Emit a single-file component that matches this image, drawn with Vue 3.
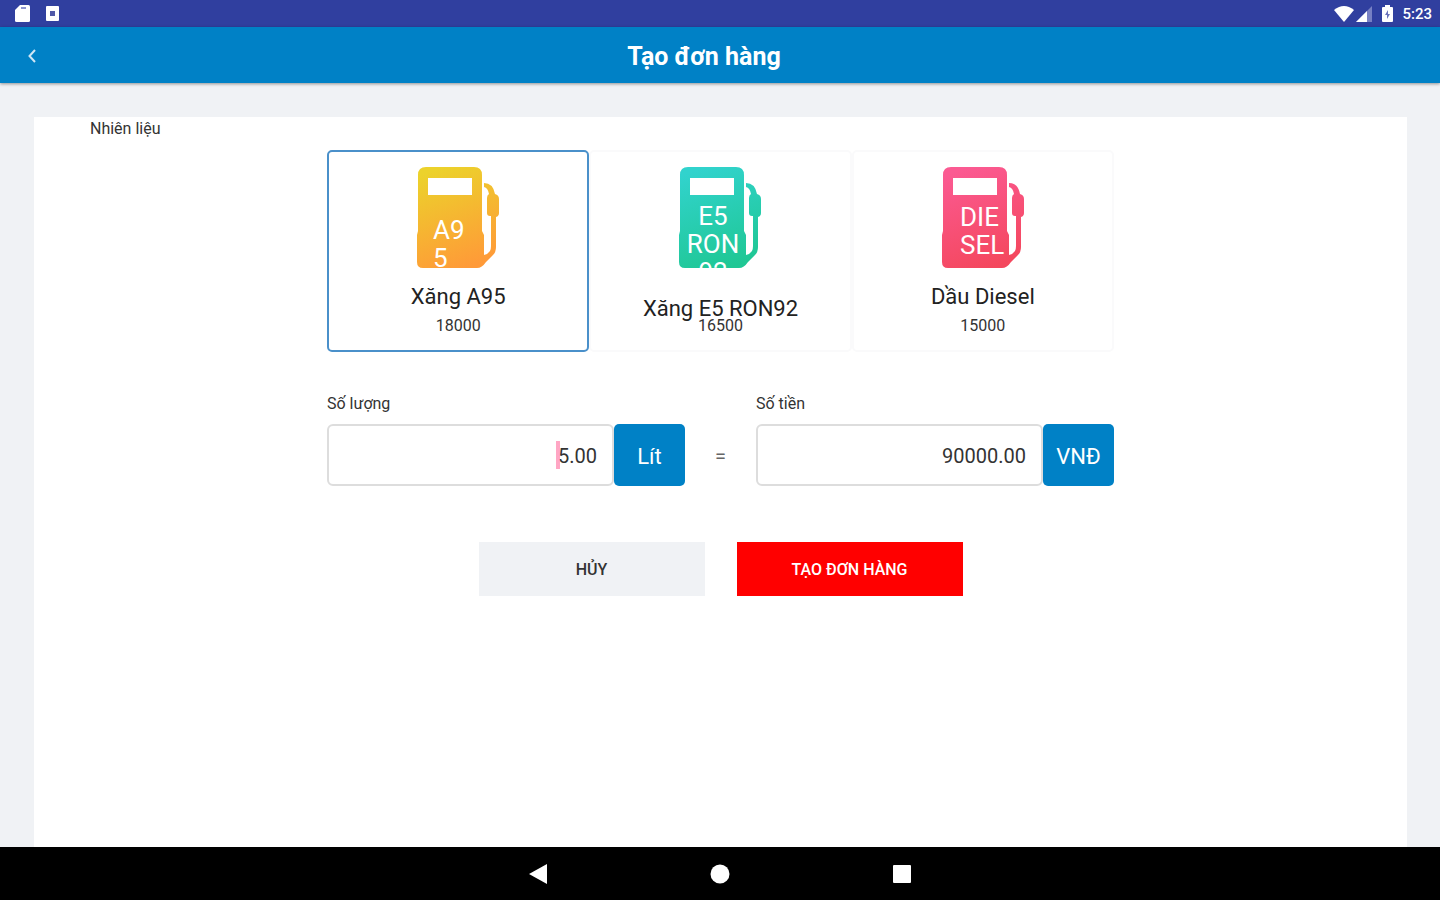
<template>
    <div class="screen">
        <div class="status-bar">
            <div class="status-group">
                <svg class="status-sd" width="15" height="17" viewBox="0 0 15 17" aria-hidden="true">
                    <path d="M5 0h8.5A1.5 1.5 0 0 1 15 1.500v14a1.500 1.500 0 0 1-1.500 1.500h-12A1.500 1.500 0 0 1 0 15.500V5z" fill="#fff" />
                    <path d="M6 3h5" stroke="#8f97d0" stroke-width="2" />
                </svg>
                <svg class="status-app" width="13" height="15" viewBox="0 0 13 15" aria-hidden="true">
                    <rect width="13" height="15" rx="1" fill="#fff" />
                    <rect x="4" y="5" width="5" height="5" fill="#5059a8" />
                </svg>
            </div>
            <div class="status-group right">
                <svg width="20" height="16" viewBox="0 0 20 16" aria-hidden="true">
                    <path d="M0 4Q10-4 20 4L10 16z" fill="#fff" />
                </svg>
                <svg width="16" height="16" viewBox="0 0 16 16" aria-hidden="true">
                    <path d="M16 0v16H0z" fill="#7780c3" />
                    <path d="M11 5v11H0z" fill="#fff" />
                </svg>
                <svg class="status-battery" width="11" height="17" viewBox="0 0 11 17" aria-hidden="true">
                    <path d="M3 0h5v2h2a1 1 0 0 1 1 1v13a1 1 0 0 1-1 1H1a1 1 0 0 1-1-1V3a1 1 0 0 1 1-1h2z" fill="#fff" />
                    <path d="M6 5L3 10h2v4l3-5H6z" fill="#6a73bb" />
                </svg>
                <span class="clock">5:23</span>
            </div>
        </div>

        <header class="header">
            <button class="back" type="button" aria-label="Quay lại">
                <svg width="8" height="14" viewBox="0 0 8 14" aria-hidden="true">
                    <path d="M7 1L1.500 7 7 13" fill="none" stroke="#cfe6f5" stroke-width="2" />
                </svg>
            </button>
            <h1>Tạo đơn hàng</h1>
        </header>

        <main class="content">
            <form class="order" @submit.prevent>
                <h2>Nhiên liệu</h2>
                <div class="form-body">
                    <div class="fuels">
                        <button
                            v-for="fuel in fuels"
                            :key="fuel.id"
                            type="button"
                            class="fuel"
                            :class="{ active: fuel.id == selected, low: fuel.low }"
                            :aria-pressed="fuel.id == selected"
                            @click="selectFuel(fuel)"
                        >
                            <svg class="pump" width="84" height="102" viewBox="0 0 84 102" aria-hidden="true">
                                <defs>
                                    <linearGradient :id="'fill-' + fuel.id" x1="0.3" y1="0" x2="0.6" y2="1">
                                        <stop offset="0" :stop-color="fuel.from" />
                                        <stop offset="1" :stop-color="fuel.to" />
                                    </linearGradient>
                                </defs>
                                <path
                                    :fill="'url(#fill-' + fuel.id + ')'"
                                    fill-rule="evenodd"
                                    d="M10 1h48q8 0 8 8v56l2 4v20q4-1 6-4 1-2 1-5V50h-1q-3 0-3-3V32q0-3 2-4-1-6-5-7v-4q9 0 11 11 4 1 4 5v14q0 3-3 4v30q0 5-3 8l-7 7q-4 6-9 6H7q-6 0-6-6V69l1-4V9q0-8 8-8zM12 12v17h44V12z"
                                />
                                <text v-for="line, i in fuel.lines" :key="i" :x="fuel.x" :y="fuel.y + i * 28" :text-anchor="fuel.anchor">{{ line }}</text>
                            </svg>
                            <span class="fuel-name">{{ fuel.name }}</span>
                            <span class="fuel-price">{{ fuel.price }}</span>
                        </button>
                    </div>

                    <div class="amounts">
                        <div class="field">
                            <label for="quantity">Số lượng</label>
                            <div class="field-row">
                                <div class="input-wrap">
                                    <input id="quantity" v-model="quantity" type="text" inputmode="decimal" @input="updateTotal" />
                                    <i class="caret"></i>
                                </div>
                                <span class="unit">Lít</span>
                            </div>
                        </div>
                        <span class="equals">=</span>
                        <div class="field">
                            <label for="total">Số tiền</label>
                            <div class="field-row">
                                <div class="input-wrap">
                                    <input id="total" v-model="total" type="text" inputmode="decimal" />
                                </div>
                                <span class="unit">VNĐ</span>
                            </div>
                        </div>
                    </div>

                    <div class="actions">
                        <button type="button" class="cancel">HỦY</button>
                        <button type="submit" class="submit">TẠO ĐƠN HÀNG</button>
                    </div>
                </div>
            </form>
        </main>

        <nav class="nav-bar">
            <button type="button" aria-label="Back">
                <svg width="18" height="20" viewBox="0 0 18 20"><path d="M18 0v20L0 10z" fill="#fff" /></svg>
            </button>
            <button type="button" aria-label="Home">
                <svg width="20" height="20" viewBox="0 0 20 20"><circle cx="10" cy="10" r="9.500" fill="#fff" /></svg>
            </button>
            <button type="button" aria-label="Recent">
                <svg width="18" height="20" viewBox="0 0 18 20"><rect y="1" width="18" height="18" rx="1" fill="#fff" /></svg>
            </button>
        </nav>
    </div>
</template>

<script setup>
import { ref } from 'vue';

const fuels = [
    { id: 'a95', name: 'Xăng A95', price: 18000, lines: ['A9', '5'], x: 17, y: 73, anchor: 'start', from: '#ecd22b', to: '#ff9a38' },
    { id: 'e5', name: 'Xăng E5 RON92', price: 16500, lines: ['E5', 'RON', '92'], x: 35, y: 59, anchor: 'middle', from: '#31d3cd', to: '#1fc794', low: true },
    { id: 'diesel', name: 'Dầu Diesel', price: 15000, lines: ['DIE', 'SEL'], x: 19, y: 60, anchor: 'start', from: '#fb5a92', to: '#f4475d' },
]

const selected = ref('a95')
const quantity = ref('5.00')
const total = ref('90000.00')

function updateTotal() {
    const fuel = fuels.find(f => f.id == selected.value)
    total.value = ((parseFloat(quantity.value) || 0) * fuel.price).toFixed(2)
}

function selectFuel(fuel) {
    selected.value = fuel.id
    updateTotal()
}
</script>

<style>
body{
    margin: 0;
}
</style>

<style scoped>
.screen{
    min-height: 100vh;
    display: flex;
    flex-direction: column;
    background: #f0f2f5;
    color: #333;
    font-family: Roboto, "Noto Sans", sans-serif;
}
.screen *{
    box-sizing: border-box;
}
svg{
    display: block;
}
button{
    font-family: inherit;
    color: inherit;
    border: 0;
    padding: 0;
    cursor: pointer;
}

.status-bar{
    height: 27px;
    padding: 0 8px 0 15px;
    display: flex;
    justify-content: space-between;
    background: #303f9f;
}
.status-group{
    display: flex;
    align-items: center;
    gap: 16px;
}
.status-group.right{
    gap: 2px;
}
.status-battery{
    margin: 0 7px 0 8px;
}
.clock{
    color: #fff;
    font-size: 15px;
    font-weight: 500;
}

.header{
    height: 56px;
    display: flex;
    align-items: center;
    padding: 2px 32px 0 0;
    background: #0081c6;
    box-shadow: 0 1px 3px rgba(0, 0, 0, 0.4);
    z-index: 1;
}
.header .back{
    width: 40px;
    height: 54px;
    margin-right: -40px;
    padding-left: 28px;
    background: none;
}
.header h1{
    flex: 1;
    margin: 0;
    text-align: center;
    color: #fff;
    font-size: 25px;
    font-weight: 700;
}

.content{
    flex: 1;
    display: flex;
    padding: 34px 33px 0 34px;
}
.order{
    flex: 1;
    background: #fff;
}
.order h2{
    margin: 0 56px;
    font-size: 16px;
    font-weight: 400;
    line-height: 24px;
}
.form-body{
    max-width: 787px;
    margin: 9px auto 0;
}

.fuels{
    display: grid;
    grid-template-columns: repeat(3, 1fr);
}
.fuel{
    height: 202px;
    padding-top: 14px;
    display: flex;
    flex-direction: column;
    align-items: center;
    background: #fff;
    border: 2px solid #fafafb;
    border-radius: 5px;
}
.fuel.active{
    border-color: #4a90ca;
}
.pump text{
    fill: #fff;
    font-size: 26px;
}
.fuel-name{
    margin-top: 15px;
    font-size: 22px;
    line-height: 28px;
    color: #222;
}
.fuel-price{
    margin-top: 5px;
    font-size: 16px;
    line-height: 20px;
}
/* long names sit lower and run into the price */
.fuel.low .fuel-name{
    margin-top: 27px;
}
.fuel.low .fuel-price{
    margin-top: -7px;
}

.amounts{
    display: grid;
    grid-template-columns: 1fr 71px 1fr;
    margin-top: 40px;
}
.field label{
    display: block;
    font-size: 16px;
    line-height: 24px;
}
.field-row{
    display: flex;
    margin-top: 8px;
}
.input-wrap{
    position: relative;
    flex: 1;
    min-width: 0;
}
.input-wrap input{
    display: block;
    width: 100%;
    height: 62px;
    padding: 2px 15px 0;
    border: 2px solid #ddd;
    border-radius: 6px;
    background: #fff;
    color: #333;
    font-family: inherit;
    font-size: 20px;
    text-align: right;
    outline: 0;
}
.caret{
    position: absolute;
    top: 17px;
    right: 54px;
    width: 4px;
    height: 28px;
    background: #ff80ab;
    opacity: 0.7;
}
.unit{
    width: 71px;
    height: 62px;
    padding-top: 2px;
    display: flex;
    align-items: center;
    justify-content: center;
    border-radius: 5px;
    background: #0081c6;
    color: #fff;
    font-size: 22px;
}
.equals{
    margin-top: 32px;
    line-height: 64px;
    text-align: center;
    font-size: 20px;
    color: #666;
}

.actions{
    display: grid;
    grid-template-columns: 1fr 1fr;
    gap: 32px;
    max-width: 484px;
    margin: 54px auto 0;
}
.actions button{
    height: 54px;
    font-size: 16px;
    font-weight: 500;
}
.actions .cancel{
    background: #f0f2f5;
}
.actions .submit{
    background: #f00;
    color: #fff;
}

.nav-bar{
    height: 53px;
    display: flex;
    align-items: center;
    justify-content: center;
    gap: 163px;
    background: #000;
}
.nav-bar button{
    background: none;
}
</style>
